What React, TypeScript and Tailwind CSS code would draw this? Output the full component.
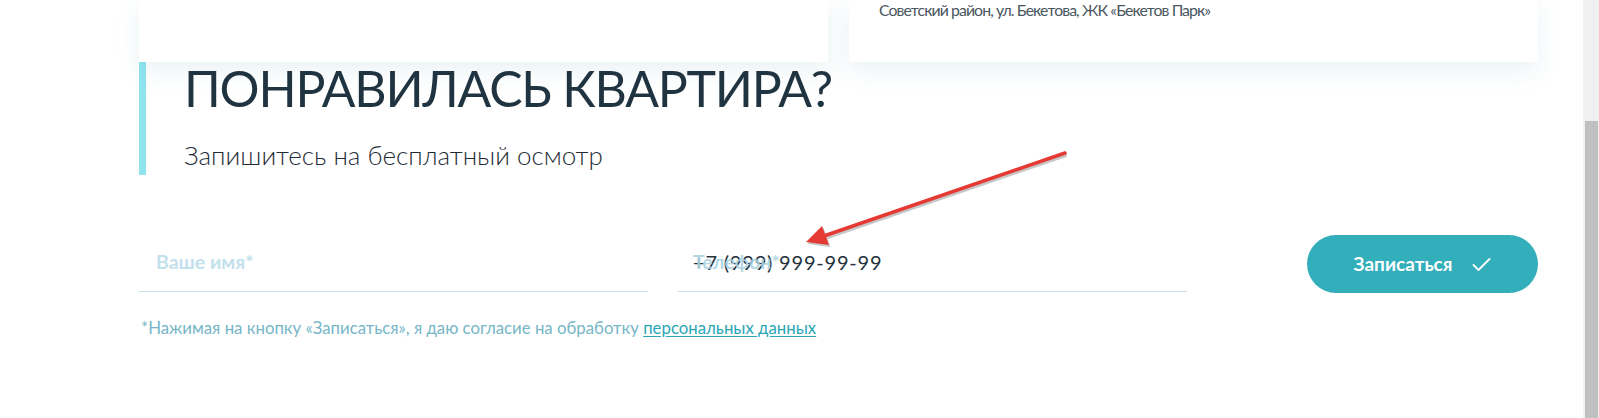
import React from 'react';

const Arrow = () => (
  <svg
    className="absolute left-[790px] top-[140px] pointer-events-none"
    width="290"
    height="115"
    viewBox="790 140 290 115"
  >
    <g transform="translate(1.5 2)" fill="#9a9a9a" opacity="0.55">
      <line x1="1065" y1="153" x2="818" y2="238" stroke="#9a9a9a" strokeWidth="3.5" />
      <polygon points="806,242 822,226 829,245" />
    </g>
    <line x1="1065" y1="153" x2="818" y2="238" stroke="#e53a33" strokeWidth="3.5" strokeLinecap="round" />
    <polygon points="806,242 822,226 829,245" fill="#e53a33" />
  </svg>
);

const Field = ({ label, value }: { label: string; value?: string }) => (
  <div className="relative w-[509px] h-[60px] border-b border-[#c4e2ec] flex items-center">
    {value && <span className="pl-[15px] text-[20px] text-[#25323d] tracking-[0.8px]">{value}</span>}
    <span
      className={`absolute left-0 top-0 h-full flex items-center text-[19.5px] font-bold ${
        value ? 'pl-[15px] text-[#a9d3e2]/90' : 'pl-[17px] text-[#c3e1ec]'
      }`}
    >
      {label}
    </span>
  </div>
);

export default function App() {
  return (
    <div className="relative flex h-[418px] w-[1599px] overflow-hidden bg-white font-['Lato',sans-serif]">
      <div className="flex-1 pl-[139px]">
        <div className="w-[1399px]">
          <div className="flex gap-[21px]">
            <div className="h-[62px] w-[689px] bg-white shadow-[0_8px_24px_rgba(40,130,160,0.10)]" />
            <div className="h-[62px] w-[689px] bg-white pl-[30px] shadow-[0_8px_24px_rgba(40,130,160,0.10)]">
              <p className="text-[15.8px] leading-[19px] tracking-[-0.9px] text-[#4a5660]">
                Советский район, ул. Бекетова, ЖК «Бекетов Парк»
              </p>
            </div>
          </div>

          <div className="flex h-[113px] flex-col border-l-[7px] border-[#8fe4ee] pl-[38px]">
            <h2 className="-mt-[5px] text-[50px] leading-[62px] tracking-[-1.2px] text-[#1f3340]">
              ПОНРАВИЛАСЬ КВАРТИРА?
            </h2>
            <p className="mt-[20px] text-[26px] font-light leading-[32px] text-[#1f2c36]">
              Запишитесь на бесплатный осмотр
            </p>
          </div>

          <div className="mt-[57px] flex items-end">
            <Field label="Ваше имя*" />
            <div className="ml-[30px]">
              <Field label="Телефон*" value="+7 (999) 999-99-99" />
            </div>
            <button className="ml-auto mb-[-1px] flex h-[58px] w-[231px] items-center justify-center gap-[20px] rounded-full bg-[#33aebb] text-[19px] font-bold text-white">
              <span>Записаться</span>
              <svg width="19" height="15" viewBox="0 0 19 15" fill="none">
                <path d="M1.5 8 L6.5 13 L17.5 2" stroke="white" strokeWidth="1.8" strokeLinecap="round" strokeLinejoin="round" />
              </svg>
            </button>
          </div>

          <p className="mt-[23px] pl-[2px] text-[16.8px] text-[#76b6c7]">
            *Нажимая на кнопку «Записаться», я даю согласие на обработку{' '}
            <a href="#" className="text-[#2aa6b5] underline underline-offset-2">
              персональных данных
            </a>
          </p>
        </div>
      </div>

      <div className="w-[16px] bg-[#f0f0f0] pt-[121px] pl-[2px] pr-[1px]">
        <div className="h-full bg-[#c0c0c0]" />
      </div>

      <Arrow />
    </div>
  );
}
